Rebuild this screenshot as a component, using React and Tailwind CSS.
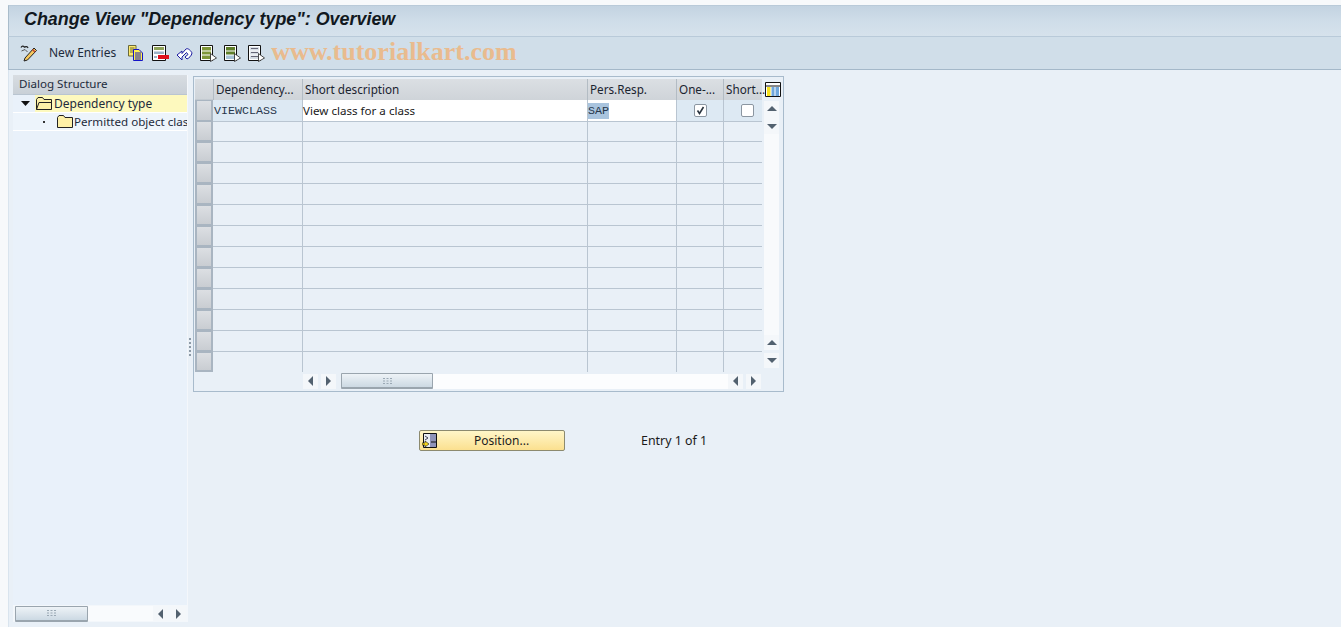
const ui = { fontFamily: '"Noto Sans", "Open Sans", sans-serif' };

function Pencil() {
  return (
    <svg width="18" height="18" viewBox="0 0 18 18" className="shrink-0">
      <path d="M1 3.5 C2 1.5 4 2 4.5 3.5 M4.5 3.5 C5.5 2 7.5 2.5 8 4" fill="none" stroke="#222" strokeWidth="1.2" />
      <path d="M5 14 L14 4 L16.5 6.5 L7.5 16 L4 17 Z" fill="#f6c75c" stroke="#222" strokeWidth="1" />
      <path d="M12.5 5.5 L15 8" stroke="#c2452d" strokeWidth="1.5" />
      <path d="M1.5 7 L5 5.5 L7.5 8" fill="none" stroke="#555" strokeWidth="1" />
    </svg>
  );
}
function Copy() {
  return (
    <svg width="16" height="17" viewBox="0 0 16 17" className="shrink-0">
      <path d="M0.5 0.5 H8 V11 H0.5 Z" fill="#ffe96b" stroke="#6a6a3a" />
      <path d="M2 3 H6.5 M2 5 H6.5 M2 7 H5" stroke="#6a6a3a" strokeWidth="1" />
      <path d="M5.5 4.5 H11 L14.5 8 V15.5 H5.5 Z" fill="#fff04d" stroke="#1414c8" />
      <path d="M7 8 H13 M7 10 H13 M7 12 H13 M7 14 H13" stroke="#1414c8" strokeWidth="1" />
    </svg>
  );
}
function DeleteRow() {
  return (
    <svg width="17" height="17" viewBox="0 0 17 17" className="shrink-0">
      <path d="M0.5 0.5 H13.5 V15.5 H0.5 Z" fill="#fff" stroke="#111" />
      <path d="M2 2 H12 V5 H2 Z" fill="#8fa35a" />
      <path d="M2 6.5 H12 V9 H2 Z" fill="#9cb3c8" />
      <path d="M6 10 H17 V14 H6 Z" fill="#e0101c" />
      <path d="M2 12 H5" stroke="#9cb3c8" strokeWidth="2" />
    </svg>
  );
}
function Undo() {
  return (
    <svg width="17" height="15" viewBox="0 0 17 15" className="shrink-0">
      <path d="M1 9 L6 5 V7.5 L10 3 C12 1.5 15.5 5.5 16 7 C15.5 10 13 12 11 13 L9 11 L12 8.5 L10.5 6.5 L6 11 V14 Z" fill="#fff" stroke="#1a1aa0" strokeWidth="1" strokeLinejoin="round" />
    </svg>
  );
}
function SelectIcon({ variant }) {
  const top = variant === 0 ? "#7e9638" : variant === 1 ? "#5f7f2b" : "#d6dde4";
  const low = variant === 0 ? "#7e9638" : variant === 1 ? "#a9c4d8" : "#d6dde4";
  return (
    <svg width="17" height="17" viewBox="0 0 17 17" className="shrink-0">
      <path d="M0.5 0.5 H12.5 V15.5 H0.5 Z" fill="#fff" stroke="#111" />
      <path d="M2 2 H11 V5.5 H2 Z" fill={top} />
      <path d="M2 6.5 H11 V9.5 H2 Z" fill={top} />
      <path d="M2 10.5 H11 V14 H2 Z" fill={low} />
      {variant === 2 && <path d="M3 3.5 H10 M3 7.5 H10 M3 11.5 H10" stroke="#667" strokeWidth="1" />}
      <path d="M10.5 8.5 L16.5 13 L10.5 16.5 Z" fill="#fff" stroke="#222" strokeWidth="0.8" />
    </svg>
  );
}
function Folder({ open }) {
  return (
    <svg width="16" height="13" viewBox="0 0 16 13" className="shrink-0">
      <path d="M0.5 2.5 L2 0.5 H6.5 L8 2.5 H15.5 V12.5 H0.5 Z" fill="#fdf0a8" stroke="#222" />
      {open && <path d="M0.5 12.5 L3 5.5 H15.5" fill="none" stroke="#222" />}
    </svg>
  );
}
function Grip() {
  return (
    <svg width="9" height="6" viewBox="0 0 9 6">
      <path d="M0 0 H2 V1 H0 Z M3.5 0 H5.5 V1 H3.5 Z M7 0 H9 V1 H7 Z M0 2.5 H2 V3.5 H0 Z M3.5 2.5 H5.5 V3.5 H3.5 Z M7 2.5 H9 V3.5 H7 Z M0 5 H2 V6 H0 Z M3.5 5 H5.5 V6 H3.5 Z M7 5 H9 V6 H7 Z" fill="#9aa8b4" />
    </svg>
  );
}
function Arrow({ dir }) {
  const d = { left: "M5 0 V10 L0 5 Z", right: "M0 0 V10 L5 5 Z", up: "M5 0 L10 5 H0 Z", down: "M0 0 H10 L5 5 Z" }[dir];
  const horizontal = dir === "left" || dir === "right";
  return (
    <div className="w-[15px] h-[15px] bg-[#f4f7fa] flex items-center justify-center shrink-0">
      <svg width={horizontal ? 5 : 10} height={horizontal ? 10 : 5} viewBox={horizontal ? "0 0 5 10" : "0 0 10 5"}>
        <path d={d} fill="#52616f" />
      </svg>
    </div>
  );
}
function Thumb({ width }) {
  return (
    <div className={`${width} h-[16px] shrink-0 rounded-[1px] border border-[#9aa5ae] border-b-2 bg-gradient-to-b from-[#eef3f7] to-[#ccd9e3] flex items-center justify-center`}>
      <Grip />
    </div>
  );
}
function RowHead() {
  return <div className="h-full border-2 border-t border-[#a9b5c1] bg-gradient-to-b from-[#dcdfe3] to-[#c9cdd2]" />;
}

const cols = "grid grid-cols-[18px_89px_285px_89px_47px_39px] w-[567px]";
const hd = "flex items-center pl-[2px] border-l border-[#b3bcc4] whitespace-nowrap text-[11.7px] text-[#1b2430] bg-gradient-to-b from-[#dbdfe3] to-[#cfd4d9]";
const mono = { fontFamily: '"Liberation Mono", monospace' };

function Row({ first, last }) {
  const b = last ? "" : "border-b border-[#b9c5d1]";
  return (
    <div className={`${cols} ${last ? "h-[20px]" : "h-[21px]"}`}>
      <RowHead />
      {first ? (
        <>
          <div className="bg-[#dde9f3] border-b border-[#b9c5d1] flex items-center pl-[1px] pt-[3px] text-[11.67px] text-[#27354a]" style={mono}>VIEWCLASS</div>
          <div className="bg-white border-b border-l border-[#b9c5d1] flex items-center pt-[1px] text-[11.6px] text-[#1a1a1a] whitespace-nowrap">View class for a class</div>
          <div className="bg-white border-b border-l border-[#b9c5d1] flex items-center text-[11.67px]" style={mono}>
            <span className="bg-[#a9c4de] text-[#26364a] h-[16px] leading-[16px] mt-[1px]">SAP</span>
          </div>
          <div className="bg-[#dde9f3] border-b border-l border-[#b9c5d1] flex items-center justify-center">
            <div className="w-[13px] h-[13px] rounded-[2px] border border-[#8b96a1] bg-white flex items-center justify-center">
              <svg width="9" height="9" viewBox="0 0 9 9"><path d="M1.5 4.5 L3.5 7.5 L7.5 1" fill="none" stroke="#2b3540" strokeWidth="1.6" /></svg>
            </div>
          </div>
          <div className="bg-[#dde9f3] border-b border-l border-[#b9c5d1] flex items-center justify-end pr-[8px]">
            <div className="w-[13px] h-[13px] rounded-[2px] border border-[#8b96a1] bg-white" />
          </div>
        </>
      ) : (
        <>
          <div className={b} />
          <div className={`${b} border-l border-l-[#b9c5d1]`} />
          <div className={`${b} border-l border-l-[#b9c5d1]`} />
          <div className={`${b} border-l border-l-[#b9c5d1]`} />
          <div className={`${b} border-l border-l-[#b9c5d1]`} />
        </>
      )}
    </div>
  );
}

export default function App() {
  return (
    <div className="w-[1341px] h-[627px] overflow-hidden bg-[#f7f9fb] pt-[5px] pl-[8px] flex flex-col" style={ui}>
      <div className="h-[31px] shrink-0 bg-gradient-to-b from-[#c3d3e1] via-[#cfdde9] to-[#d6e2ec] border-t border-[#b9cad9] border-l border-l-[#a9bccb] flex items-center pl-[15px] pb-[3px]">
        <span className="text-[17.9px] font-bold italic text-[#111820]" style={{ fontFamily: '"Liberation Sans", sans-serif' }}>Change View "Dependency type": Overview</span>
      </div>
      <div className="h-[34px] shrink-0 bg-[#d0dee9] border-t border-[#b9cad9] border-b border-b-[#a4b8c9] border-l border-l-[#a9bccb] flex items-center pl-[11px]">
        <Pencil />
        <span className="ml-[11px] text-[12px] text-[#1d2b3c] whitespace-nowrap">New Entries</span>
        <div className="ml-[12px] flex items-center">
          <div className="w-[24px]"><Copy /></div>
          <div className="w-[24px]"><DeleteRow /></div>
          <div className="w-[24px]"><Undo /></div>
          <div className="w-[24px]"><SelectIcon variant={0} /></div>
          <div className="w-[24px]"><SelectIcon variant={1} /></div>
          <div className="w-[23px]"><SelectIcon variant={2} /></div>
        </div>
        <span className="text-[26px] font-bold text-[#e9bb8e] whitespace-nowrap pb-[3px]" style={{ fontFamily: '"Liberation Serif", serif' }}>www.tutorialkart.com</span>
      </div>
      <div className="flex-1 min-h-0 flex bg-[#e9f0f7] border-l border-[#d9e4ee]">
        <div className="ml-[4px] mt-[5px] w-[175px] h-[547px] shrink-0 bg-[#e9f1fa] border-r border-[#f4f7fb] flex flex-col">
          <div className="h-[20px] shrink-0 bg-gradient-to-b from-[#d8dde2] to-[#c9d0d7] border-b border-[#b9c5d1] flex items-center pl-[6px] pb-[2px] text-[11.6px] text-[#1d2b3c]">Dialog Structure</div>
          <div className="h-[18px] shrink-0 flex items-center border-b border-[#fff]">
            <div className="w-[22px] flex justify-center pl-[2px]">
              <svg width="9" height="5" viewBox="0 0 9 5"><path d="M0 0 H9 L4.5 5 Z" fill="#111" /></svg>
            </div>
            <div className="flex-1 h-full bg-[#fdf9be] flex items-center text-[12px] text-[#1d2b3c] overflow-hidden whitespace-nowrap pl-[1px]">
              <Folder open />
              <span className="ml-[2px]">Dependency type</span>
            </div>
          </div>
          <div className="h-[18px] shrink-0 flex items-center border-b border-[#fff] bg-[#edf4fb] overflow-hidden whitespace-nowrap text-[11.6px] text-[#1d2b3c]">
            <div className="w-[44px] pl-[30px] shrink-0"><div className="w-[2px] h-[2px] bg-[#333]" /></div>
            <Folder />
            <span className="ml-[1px]">Permitted object classes</span>
          </div>
          <div className="flex-1" />
          <div className="h-[17px] shrink-0 flex items-center pl-[2px] bg-[#f3f7fb]">
            <Thumb width="w-[73px]" />
            <div className="flex-1 bg-[#f9fbfd] h-[15px]" />
            <Arrow dir="left" />
            <div className="w-[3px]" />
            <Arrow dir="right" />
            <div className="w-[1px]" />
          </div>
        </div>
        <div className="w-[5px] shrink-0 flex items-center pl-[1px] pb-[4px]">
          <svg width="2" height="18" viewBox="0 0 2 18"><path d="M0 0 H2 V2 H0 Z M0 4 H2 V6 H0 Z M0 8 H2 V10 H0 Z M0 12 H2 V14 H0 Z M0 16 H2 V18 H0 Z" fill="#8d9aa6" /></svg>
        </div>
        <div className="flex-1 pt-[6px]">
          <div className="w-[591px] h-[316px] border border-[#a8bbcc] flex flex-col pl-[1px] pt-[2px]">
            <div className="flex">
              <div>
                <div className={`${cols} h-[21px]`}>
                  <div className="bg-gradient-to-b from-[#dbdfe3] to-[#cfd4d9] border-b border-[#c3cad1]" />
                  <div className={hd}>Dependency...</div>
                  <div className={hd}>Short description</div>
                  <div className={hd}>Pers.Resp.</div>
                  <div className={hd}>One-...</div>
                  <div className={hd}>Short...</div>
                </div>
                <Row first />
                {Array.from({ length: 11 }, (_, i) => <Row key={i} />)}
                <Row last />
              </div>
              <div className="w-[20px] ml-[1px] flex flex-col items-start pl-[1px]">
                <div className="h-[21px] w-[18px] flex items-center justify-center">
                  <svg width="16" height="15" viewBox="0 0 16 15">
                    <path d="M0.5 0.5 H15.5 V14.5 H0.5 Z" fill="#fff" stroke="#111" />
                    <path d="M1 4 H15" stroke="#111" />
                    <path d="M2 5 H5.5 V14 H2 Z" fill="#f7e11e" />
                    <path d="M6.5 5 H9.5 V14 H6.5 Z" fill="#6fa7dc" />
                    <path d="M10.5 5 H14 V14 H10.5 Z" fill="#6fa7dc" />
                  </svg>
                </div>
                <div className="mt-[1px] flex flex-col gap-[3px] bg-[#f4f7fa]">
                  <Arrow dir="up" />
                  <Arrow dir="down" />
                </div>
                <div className="w-[15px] h-[201px] bg-[#f8fafc]" />
                <div className="flex flex-col gap-[3px]">
                  <Arrow dir="up" />
                  <Arrow dir="down" />
                </div>
              </div>
            </div>
            <div className="flex items-center pl-[108px] mt-[1px]">
              <Arrow dir="left" />
              <div className="w-[3px]" />
              <Arrow dir="right" />
              <div className="w-[5px]" />
              <Thumb width="w-[92px]" />
              <div className="w-[295px] h-[15px] bg-[#fcfdfe]" />
              <Arrow dir="left" />
              <div className="w-[3px]" />
              <Arrow dir="right" />
            </div>
          </div>
          <div className="flex items-center mt-[38px] ml-[226px]">
            <div className="w-[146px] h-[21px] rounded-[2px] border border-[#8c8a6f] bg-gradient-to-b from-[#fff6c8] to-[#fbe08f] flex items-center relative text-[12px] text-[#1d1d1d]">
              <svg width="15" height="15" viewBox="0 0 15 15" className="ml-[2px] shrink-0">
                <path d="M1.5 0.5 H14.5 V14.5 H1.5 Z" fill="#8f93b8" stroke="#111" />
                <path d="M2 1 H8 V14 H2 Z" fill="#e9edf2" />
                <path d="M9 9 H14" stroke="#111" />
                <path d="M3 3 L6 5 L3 7" fill="none" stroke="#445" />
                <path d="M0 10 H3 V8 L7 11 L3 14 V12 H0 Z" fill="#f8d81c" stroke="#111" strokeWidth="0.6" />
              </svg>
              <span className="ml-[37px]">Position...</span>
            </div>
            <span className="ml-[76px] pt-[1px] text-[12.4px] text-[#1a1a1a]">Entry 1 of 1</span>
          </div>
        </div>
      </div>
    </div>
  );
}
